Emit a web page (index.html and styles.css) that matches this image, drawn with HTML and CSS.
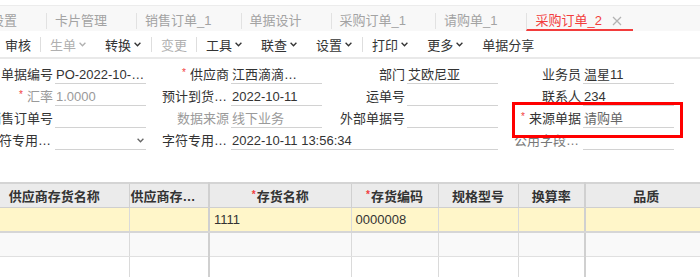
FILE: index.html
```html
<!DOCTYPE html>
<html lang="zh-CN">
<head>
<meta charset="utf-8">
<link rel="stylesheet" href="styles.css">
</head>
<body>
<div class="tabs">
  <div class="tab">设置</div>
  <div class="tab">卡片管理</div>
  <div class="tab">销售订单_1</div>
  <div class="tab">单据设计</div>
  <div class="tab">采购订单_1</div>
  <div class="tab">请购单_1</div>
  <div class="tab active">采购订单_2<svg class="close" width="10" height="10" viewBox="0 0 10 10"><path d="M1 1L9 9M9 1L1 9" stroke="#b3b3b3" stroke-width="1.3" fill="none"/></svg></div>
</div>

<div class="toolbar">
  <span class="tb-item">审核</span>
  <span class="tb-sep"></span>
  <span class="tb-item drop disabled">生单<svg class="chev" width="7" height="5" viewBox="0 0 7 5"><path d="M0.6 0.8L3.5 3.8L6.4 0.8" stroke="currentColor" stroke-width="1.3" fill="none"/></svg></span>
  <span class="tb-item drop">转换<svg class="chev" width="7" height="5" viewBox="0 0 7 5"><path d="M0.6 0.8L3.5 3.8L6.4 0.8" stroke="currentColor" stroke-width="1.3" fill="none"/></svg></span>
  <span class="tb-sep"></span>
  <span class="tb-item disabled">变更</span>
  <span class="tb-sep"></span>
  <span class="tb-item drop">工具<svg class="chev" width="7" height="5" viewBox="0 0 7 5"><path d="M0.6 0.8L3.5 3.8L6.4 0.8" stroke="currentColor" stroke-width="1.3" fill="none"/></svg></span>
  <span class="tb-item drop">联查<svg class="chev" width="7" height="5" viewBox="0 0 7 5"><path d="M0.6 0.8L3.5 3.8L6.4 0.8" stroke="currentColor" stroke-width="1.3" fill="none"/></svg></span>
  <span class="tb-item drop">设置<svg class="chev" width="7" height="5" viewBox="0 0 7 5"><path d="M0.6 0.8L3.5 3.8L6.4 0.8" stroke="currentColor" stroke-width="1.3" fill="none"/></svg></span>
  <span class="tb-sep"></span>
  <span class="tb-item drop">打印<svg class="chev" width="7" height="5" viewBox="0 0 7 5"><path d="M0.6 0.8L3.5 3.8L6.4 0.8" stroke="currentColor" stroke-width="1.3" fill="none"/></svg></span>
  <span class="tb-item drop">更多<svg class="chev" width="7" height="5" viewBox="0 0 7 5"><path d="M0.6 0.8L3.5 3.8L6.4 0.8" stroke="currentColor" stroke-width="1.3" fill="none"/></svg></span>
  <span class="tb-item">单据分享</span>
</div>

<div class="form">
  <div class="lbl"><span class="lt">单据编号</span></div>
  <div class="fld">PO-2022-10-0001</div>
  <div class="lbl"><span class="req">*</span><span class="lt">供应商</span></div>
  <div class="fld ref">江西滴滴科技有限公司</div>
  <div class="lbl"><span class="lt">部门</span></div>
  <div class="fld">艾欧尼亚</div>
  <div class="lbl"><span class="lt">业务员</span></div>
  <div class="fld">温星11</div>

  <div class="lbl muted"><span class="req">*</span><span class="lt">汇率</span></div>
  <div class="fld muted">1.0000</div>
  <div class="lbl"><span class="lt">预计到货日期</span></div>
  <div class="fld">2022-10-11</div>
  <div class="lbl"><span class="lt">运单号</span></div>
  <div class="fld"></div>
  <div class="lbl"><span class="lt">联系人</span></div>
  <div class="fld">234</div>

  <div class="lbl"><span class="lt">销售订单号</span></div>
  <div class="fld"></div>
  <div class="lbl muted"><span class="lt">数据来源</span></div>
  <div class="fld muted">线下业务</div>
  <div class="lbl"><span class="lt">外部单据号</span></div>
  <div class="fld"></div>
  <div class="lbl"><span class="req">*</span><span class="lt">来源单据</span></div>
  <div class="fld soft">请购单</div>

  <div class="lbl"><span class="lt">字符专用字段</span></div>
  <div class="fld select"><span></span><svg class="chev" width="7" height="5" viewBox="0 0 7 5"><path d="M0.6 0.8L3.5 3.8L6.4 0.8" stroke="#666" stroke-width="1.3" fill="none"/></svg></div>
  <div class="lbl"><span class="lt">字符专用字段</span></div>
  <div class="fld span3">2022-10-11 13:56:34</div>
  <div class="lbl soft"><span class="lt">公用字段字段</span></div>
  <div class="fld"></div>
</div>

<table class="grid">
  <colgroup>
    <col class="c0"><col class="c1"><col class="c2"><col class="c3"><col class="c4"><col class="c5"><col class="c6">
  </colgroup>
  <thead>
    <tr>
      <th>供应商存货名称</th>
      <th class="thick">供应商存货编码</th>
      <th><span class="req">*</span>存货名称</th>
      <th><span class="req">*</span>存货编码</th>
      <th>规格型号</th>
      <th class="thick">换算率</th>
      <th>品质</th>
    </tr>
  </thead>
  <tbody>
    <tr class="cur">
      <td></td><td class="thick"></td><td>1111</td><td>0000008</td><td></td><td class="thick"></td><td></td>
    </tr>
    <tr class="alt">
      <td></td><td class="thick"></td><td></td><td></td><td></td><td class="thick"></td><td></td>
    </tr>
    <tr>
      <td></td><td class="thick"></td><td></td><td></td><td></td><td class="thick"></td><td></td>
    </tr>
  </tbody>
</table>

<div class="highlight"></div>
</body>
</html>
```

FILE: styles.css
```css
html, body {
  margin: 0;
  padding: 0;
}
body {
  width: 700px;
  height: 277px;
  overflow: hidden;
  position: relative;
  background: #fff;
  font-family: "Liberation Sans", "Noto Sans CJK SC", sans-serif;
  font-size: 13px;
  color: #333;
}

/* tabs */
.tabs {
  display: flex;
  align-items: flex-end;
  height: 25px;
  margin-top: 5px;
  margin-left: -18px;
  border-top: 1px solid #ececec;
  background: #f8f8f8;
  white-space: nowrap;
}
.tab {
  height: 16px;
  line-height: 16px;
  margin-bottom: 2px;
  padding: 0 29px 0 8px;
  border-left: 1px solid #e2e2e2;
  color: #a3a3a3;
  display: flex;
  align-items: center;
}
.tab.active {
  color: #f23d3d;
  padding-right: 11px;
  margin-bottom: 0;
  height: 16px;
  border-bottom: 2px solid #f23d3d;
}
.tab .close {
  margin-left: 10px;
}

/* toolbar */
.toolbar {
  display: flex;
  align-items: center;
  height: 26px;
  margin-left: -4px;
  border-bottom: 2px solid #e9e9e9;
  white-space: nowrap;
}
.tb-item {
  display: flex;
  align-items: center;
  padding: 0 9px;
  color: #333;
}
.tb-item.drop {
  padding-right: 10px;
}
.tb-item.disabled {
  color: #b0b0b0;
}
.tb-item .chev {
  margin-left: 3px;
  margin-top: 1px;
}
.tb-sep {
  width: 1px;
  height: 15px;
  background: #dedede;
}

/* form */
.form {
  display: grid;
  grid-template-columns: repeat(4, 85px 91px);
  grid-auto-rows: 22px;
  margin: 7px 0 0 -30px;
}
.lbl {
  display: flex;
  justify-content: flex-end;
  align-items: flex-start;
  padding-right: 2px;
  line-height: 17px;
  height: 17px;
  white-space: nowrap;
  overflow: hidden;
  color: #333;
}
.lbl.muted {
  color: #9a9a9a;
}
.lbl.soft {
  color: #777;
}
.lt {
  max-width: 67px;
  overflow: hidden;
  text-overflow: ellipsis;
}
.req {
  color: #f23d3d;
  font-size: 10px;
  line-height: 13px;
  margin-right: 4px;
}
.fld {
  height: 17px;
  line-height: 17px;
  padding-left: 1px;
  padding-right: 1px;
  border-bottom: 1px solid #d2d2d2;
  white-space: nowrap;
  overflow: hidden;
  text-overflow: ellipsis;
  color: #333;
}
.fld.ref {
  padding-right: 20px;
}
.fld.muted {
  color: #9a9a9a;
}
.fld.soft {
  color: #666;
}
.fld.select {
  display: flex;
  justify-content: space-between;
  align-items: center;
  padding-right: 2px;
}
.fld.span3 {
  grid-column: span 3;
}

/* table */
.grid {
  margin: 28px 0 0 -20px;
  border-collapse: collapse;
  table-layout: fixed;
  width: 727px;
  border-top: 2px solid #d4d4d4;
}
.c0 { width: 149px; }
.c1 { width: 80px; }
.c2 { width: 142px; }
.c3 { width: 87px; }
.c4 { width: 80px; }
.c5 { width: 67px; }
.c6 { width: 122px; }
.grid th {
  height: 23px;
  padding: 0 1px;
  background: #ebebeb;
  font-weight: bold;
  color: #333;
  text-align: center;
  white-space: nowrap;
  overflow: hidden;
  text-overflow: ellipsis;
  border-right: 1px solid #d0d0d0;
  border-bottom: 1px solid #cfcfcf;
}
.grid th .req {
  font-size: 10px;
  margin-right: 1px;
  vertical-align: 3px;
}
.grid td {
  height: 23px;
  padding: 0 4px;
  border-right: 1px solid #dadada;
  border-bottom: 1px solid #e0e0e0;
  white-space: nowrap;
  overflow: hidden;
  color: #333;
}
.grid th.thick,
.grid td.thick {
  border-right: 2px solid #d0d0d0;
}
.grid tr.cur td {
  background: #fff6c9;
  border-bottom: 2px solid #d6d6d6;
}
.grid tr.alt td {
  background: #f9f9f9;
}

/* highlight box */
.highlight {
  position: absolute;
  left: 512px;
  top: 102px;
  width: 165px;
  height: 30px;
  border: 3px solid #ff0000;
  pointer-events: none;
}
```
